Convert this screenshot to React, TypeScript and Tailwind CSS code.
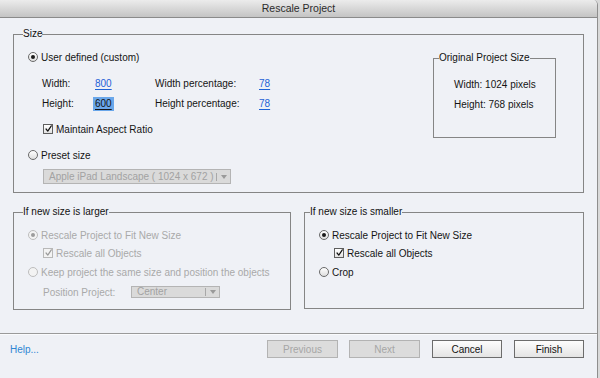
import React from "react";

const BG = "bg-[#eff1f6]";

function Radio({ checked, disabled }: { checked?: boolean; disabled?: boolean }) {
  return (
    <span
      className={`w-[10px] h-[10px] rounded-full border flex items-center justify-center shrink-0 ${
        disabled ? "border-[#bdbdbd] bg-[#f3f3f3]" : "border-[#6a6a6a] bg-gradient-to-b from-white to-[#dedede]"
      }`}
    >
      {checked && <span className={`w-[4px] h-[4px] rounded-full ${disabled ? "bg-[#9c9c9c]" : "bg-[#1a1a1a]"}`} />}
    </span>
  );
}

function Check({ checked, disabled }: { checked?: boolean; disabled?: boolean }) {
  return (
    <span
      className={`w-[10px] h-[10px] border flex items-center justify-center shrink-0 ${
        disabled ? "border-[#b8b8b8] bg-[#f3f3f3]" : "border-[#5e5e5e] bg-gradient-to-b from-white to-[#e2e2e2]"
      }`}
    >
      {checked && (
        <svg width="10" height="10" viewBox="0 0 10 10" className="-mt-[1px] ml-[1px]">
          <path
            d="M1.5 5 L4 8 L9 0.5"
            fill="none"
            stroke={disabled ? "#9a9a9a" : "#111"}
            strokeWidth="1.7"
            strokeLinecap="round"
            strokeLinejoin="round"
          />
        </svg>
      )}
    </span>
  );
}

function Group({
  title,
  className,
  legendClass,
  children,
}: {
  title: string;
  className: string;
  legendClass: string;
  children?: React.ReactNode;
}) {
  return (
    <div className={`relative border border-[#858585] shrink-0 ${className}`}>
      <span className={`absolute top-[-7px] ${BG} leading-[12px] text-[#111] ${legendClass}`}>{title}</span>
      {children}
    </div>
  );
}

function Dropdown({ label, className }: { label: string; className: string }) {
  return (
    <div className={`flex items-center border border-[#b4b4b4] bg-[#dadada] text-[#a2a2a2] ${className}`}>
      <span className="flex-1 pl-[5px] leading-none whitespace-nowrap overflow-hidden">{label}</span>
      <span className="w-[1px] h-[8px] bg-[#a8a8a8]" />
      <span className="w-[13px] flex items-center justify-center">
        <svg width="6" height="4" viewBox="0 0 6 4">
          <path d="M0 0 L6 0 L3 4 Z" fill="#9a9a9a" />
        </svg>
      </span>
    </div>
  );
}

function Button({ label, disabled, className }: { label: string; disabled?: boolean; className: string }) {
  return (
    <div
      className={`h-[18px] flex items-center justify-center border ${
        disabled
          ? "border-[#b3b3b3] bg-[#dcdcdc] text-[#a6a6a6]"
          : "border-[#6c6c6c] bg-gradient-to-b from-[#fdfdfd] to-[#e4e4e4] text-[#111]"
      } ${className}`}
    >
      {label}
    </div>
  );
}

export default function App() {
  return (
    <div className="w-[600px] h-[378px] bg-[#d9d9d9] flex font-['Liberation_Sans',Arial,sans-serif] text-[10px] text-[#141414]">
      <div className={`w-[598px] h-full flex flex-col ${BG} border-r border-[#8e8e8e] rounded-tr-[5px] overflow-hidden`}>
        {/* Title bar */}
        <div className="h-[18px] shrink-0 bg-gradient-to-b from-[#ececec] to-[#c4c4c4] border-b border-[#8a8a8a] flex items-center justify-center text-[10.5px] text-[#2b2b2b]">
          Rescale Project
        </div>

        {/* Size group */}
        <Group title="Size" className="mt-[16px] ml-[13px] w-[571px] h-[159px] flex" legendClass="left-[9px]">
          <div className="flex-1 flex flex-col pl-[14px] pt-[16px]">
            <div className="h-[12px] flex items-center gap-[3px]">
              <Radio checked />
              <span>User defined (custom)</span>
            </div>
            <div className="mt-[13px] ml-[14px] h-[14px] grid grid-cols-[53px_60px_104px_auto] items-center">
              <span>Width:</span>
              <span className="text-[#1f62d6] underline underline-offset-2">800</span>
              <span>Width percentage:</span>
              <span className="text-[#1f62d6] underline underline-offset-2">78</span>
            </div>
            <div className="mt-[6px] ml-[14px] h-[14px] grid grid-cols-[53px_60px_104px_auto] items-center">
              <span>Height:</span>
              <span className="flex">
                <span className="-ml-[2px] px-[2px] h-[14px] leading-[14px] bg-[#6aa7ea] underline underline-offset-2">600</span>
              </span>
              <span>Height percentage:</span>
              <span className="text-[#1f62d6] underline underline-offset-2">78</span>
            </div>
            <div className="mt-[13px] ml-[15px] h-[12px] flex items-center gap-[3px]">
              <Check checked />
              <span>Maintain Aspect Ratio</span>
            </div>
            <div className="mt-[14px] h-[12px] flex items-center gap-[3px]">
              <Radio />
              <span>Preset size</span>
            </div>
            <Dropdown label="Apple iPad Landscape ( 1024 x 672 )" className="mt-[8px] ml-[15px] w-[188px] h-[15px]" />
          </div>
          <Group
            title="Original Project Size"
            className="mt-[23px] mr-[27px] w-[123px] h-[80px] flex flex-col pl-[20px] pt-[19px]"
            legendClass="left-[5px]"
          >
            <div className="h-[12px] flex items-center">Width: 1024 pixels</div>
            <div className="mt-[8px] h-[12px] flex items-center">Height: 768 pixels</div>
          </Group>
        </Group>

        {/* Lower groups */}
        <div className="mt-[19px] ml-[13px] flex gap-[13px] items-start">
          <Group
            title="If new size is larger"
            className="w-[278px] h-[98px] flex flex-col pl-[14px] pt-[16px] text-[#a9a9a9]"
            legendClass="left-[9px]"
          >
            <div className="h-[12px] flex items-center gap-[3px]">
              <Radio checked disabled />
              <span>Rescale Project to Fit New Size</span>
            </div>
            <div className="mt-[6px] ml-[15px] h-[12px] flex items-center gap-[3px]">
              <Check checked disabled />
              <span>Rescale all Objects</span>
            </div>
            <div className="mt-[7px] h-[12px] flex items-center gap-[3px]">
              <Radio disabled />
              <span>Keep project the same size and position the objects</span>
            </div>
            <div className="mt-[7px] ml-[15px] h-[14px] flex items-center">
              <span className="w-[88px]">Position Project:</span>
              <Dropdown label="Center" className="w-[89px] h-[12px]" />
            </div>
          </Group>
          <Group
            title="If new size is smaller"
            className="w-[280px] h-[97px] flex flex-col pl-[14px] pt-[16px]"
            legendClass="left-[5px]"
          >
            <div className="h-[12px] flex items-center gap-[3px]">
              <Radio checked />
              <span>Rescale Project to Fit New Size</span>
            </div>
            <div className="mt-[6px] ml-[15px] h-[12px] flex items-center gap-[3px]">
              <Check checked />
              <span>Rescale all Objects</span>
            </div>
            <div className="mt-[7px] h-[12px] flex items-center gap-[3px]">
              <Radio />
              <span>Crop</span>
            </div>
          </Group>
        </div>

        {/* Footer */}
        <div className="mt-[23px] h-[1px] bg-[#9a9a9a] shrink-0" />
        <div className="h-[1px] bg-[#fafbfd] shrink-0" />
        <div className="mt-[5px] h-[18px] flex items-center pl-[10px] pr-[13px]">
          <span className="text-[#2f86d3]">Help...</span>
          <div className="flex-1" />
          <Button label="Previous" disabled className="w-[71px]" />
          <Button label="Next" disabled className="w-[71px] ml-[11px]" />
          <Button label="Cancel" className="w-[70px] ml-[12px]" />
          <Button label="Finish" className="w-[70px] ml-[12px]" />
        </div>
      </div>
    </div>
  );
}
